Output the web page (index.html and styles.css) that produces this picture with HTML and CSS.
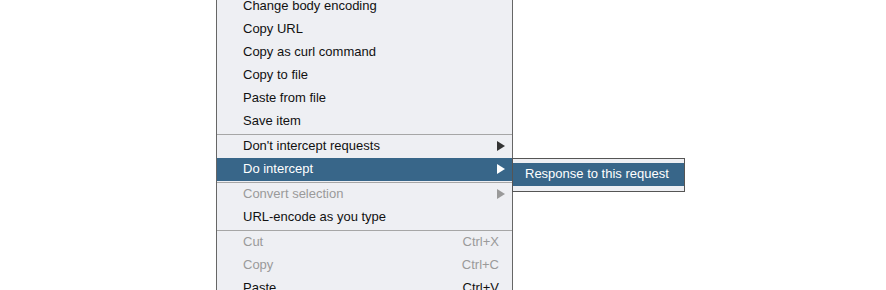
FILE: index.html
```html
<!DOCTYPE html>
<html>
<head>
<meta charset="utf-8">
<link rel="stylesheet" href="styles.css">
</head>
<body>
<div class="menu">
  <div class="item"><span class="label">Change body encoding</span></div>
  <div class="item"><span class="label">Copy URL</span></div>
  <div class="item"><span class="label">Copy as curl command</span></div>
  <div class="item"><span class="label">Copy to file</span></div>
  <div class="item"><span class="label">Paste from file</span></div>
  <div class="item"><span class="label">Save item</span></div>
  <div class="sep"></div>
  <div class="item lifted"><span class="label">Don't intercept requests</span><span class="arrow"></span></div>
  <div class="item lifted active"><span class="label">Do intercept</span><span class="arrow"></span></div>
  <div class="sep sep-tight"></div>
  <div class="item lifted disabled"><span class="label">Convert selection</span><span class="arrow"></span></div>
  <div class="item lifted"><span class="label">URL-encode as you type</span></div>
  <div class="sep sep-tight"></div>
  <div class="item lifted disabled"><span class="label">Cut</span><span class="key">Ctrl+X</span></div>
  <div class="item lifted disabled"><span class="label">Copy</span><span class="key">Ctrl+C</span></div>
  <div class="item lifted"><span class="label">Paste</span><span class="key">Ctrl+V</span></div>
</div>
<div class="submenu">
  <div class="subitem active">Response to this request</div>
</div>
</body>
</html>
```
FILE: styles.css
```css
html, body {
  margin: 0;
  padding: 0;
  background: #ffffff;
  width: 886px;
  height: 290px;
  overflow: hidden;
  font-family: "Liberation Sans", Arial, sans-serif;
  font-size: 13px;
  color: #111;
}

.menu {
  position: absolute;
  left: 216px;
  top: -6px;
  width: 295px;
  background: #eeeff3;
  border-left: 1px solid #666;
  border-right: 1px solid #666;
  display: flex;
  flex-direction: column;
}

.item {
  height: 23px;
  box-sizing: border-box;
  display: flex;
  align-items: center;
  padding-left: 26px;
  padding-right: 13px;
}

.item.lifted {
  padding-bottom: 2px;
}

.item .label {
  flex: 1;
}

.item .key {
  color: #111;
}

.item.disabled .label,
.item.disabled .key {
  color: #9a9a9a;
}

.item.active {
  background: #386689;
  color: #ffffff;
}

.arrow {
  width: 0;
  height: 0;
  border-top: 5px solid transparent;
  border-bottom: 5px solid transparent;
  border-left: 8px solid #333;
  margin-right: -6px;
}

.item.active .arrow {
  border-left-color: #ffffff;
}

.item.disabled .arrow {
  border-left-color: #9a9a9a;
}

.sep {
  height: 1px;
  background: #a6a6a6;
  margin: 2px 0 0 0;
}

.sep-tight {
  margin-top: 1px;
}

.submenu {
  position: absolute;
  left: 512px;
  top: 158px;
  width: 171px;
  background: #eeeff3;
  border: 1px solid #555;
  padding: 4px 0 5px 0;
}

.subitem {
  height: 23px;
  box-sizing: border-box;
  padding-bottom: 2px;
  display: flex;
  align-items: center;
  padding-left: 12px;
}

.subitem.active {
  background: #386689;
  color: #ffffff;
}
```
